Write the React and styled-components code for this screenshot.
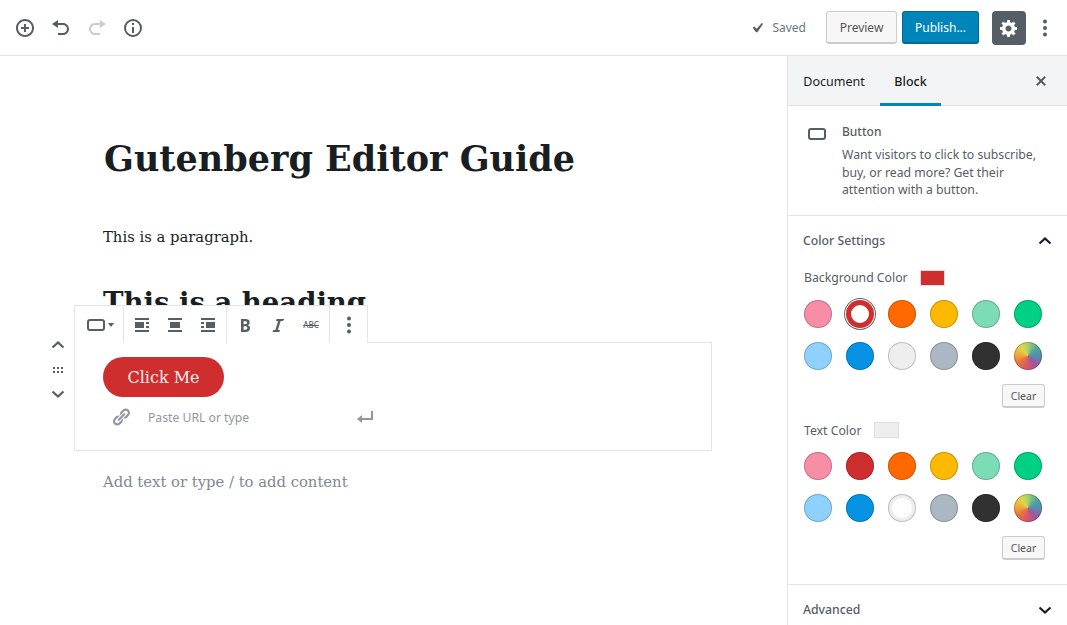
import styled, { createGlobalStyle } from "styled-components";

const GlobalStyle = createGlobalStyle`
  html, body {
    margin: 0;
    padding: 0;
    background: #fff;
  }
  body {
    font-family: "Noto Sans", "Open Sans", sans-serif;
    font-size: 13px;
    color: #191e23;
  }
  * {
    box-sizing: border-box;
  }
`;

const paths = {
  insert:
    "M10 1c-5 0-9 4-9 9s4 9 9 9 9-4 9-9-4-9-9-9zm0 16c-3.9 0-7-3.1-7-7s3.1-7 7-7 7 3.1 7 7-3.1 7-7 7zm1-11H9v3H6v2h3v3h2v-3h3V9h-3V6z",
  undo: "M12 5H7V2L1 6l6 4V7h5c2.2 0 4 1.8 4 4s-1.8 4-4 4H7v2h5c3.3 0 6-2.7 6-6s-2.7-6-6-6z",
  redo: "M8 5h5V2l6 4-6 4V7H8c-2.2 0-4 1.8-4 4s1.8 4 4 4h5v2H8c-3.3 0-6-2.7-6-6s2.7-6 6-6z",
  info: "M10 1a9 9 0 1 0 0 18 9 9 0 0 0 0-18zm0 16a7 7 0 1 1 0-14 7 7 0 0 1 0 14zM9 9h2v6H9V9zm0-4h2v2H9V5z",
  check: "M14.83 4.89l1.34.94-5.81 8.38H9.02L5.78 9.67l1.34-1.25 2.57 2.4z",
  gear: "M18 12h-2.18c-.17.7-.44 1.35-.81 1.93l1.54 1.54-2.1 2.1-1.54-1.54c-.58.36-1.23.63-1.91.79V19H8v-2.18c-.68-.16-1.33-.43-1.91-.79l-1.54 1.54-2.12-2.12 1.54-1.54c-.36-.58-.63-1.23-.79-1.91H1V9.03h2.17c.16-.7.44-1.35.8-1.94L2.43 5.55l2.1-2.1 1.54 1.54c.58-.37 1.24-.64 1.93-.81V2h3v2.18c.68.16 1.33.43 1.91.79l1.54-1.54 2.12 2.12-1.54 1.54c.36.59.64 1.24.8 1.94H18V12zm-8.5 1.5c1.66 0 3-1.34 3-3s-1.34-3-3-3-3 1.34-3 3 1.34 3 3 3z",
  close:
    "M14.95 6.46L11.41 10l3.54 3.54-1.41 1.41L10 11.42l-3.53 3.53-1.42-1.42L8.58 10 5.05 6.47l1.42-1.42L10 8.58l3.54-3.53z",
  alignLeft: "M3 5h14V3H3v2zm9 8V7H3v6h9zm2-4h3V7h-3v2zm0 4h3v-2h-3v2zM3 17h14v-2H3v2z",
  alignCenter: "M3 5h14V3H3v2zm12 8V7H5v6h10zM3 17h14v-2H3v2z",
  alignRight: "M3 5h14V3H3v2zm0 4h3V7H3v2zm14 4V7H8v6h9zM3 13h3v-2H3v2zm0 4h14v-2H3v2z",
  bold: "M6 4v13h4.54c1.37 0 2.46-.33 3.26-1 .8-.66 1.2-1.58 1.2-2.77 0-.84-.17-1.51-.51-2.01s-.9-.85-1.67-1.03v-.09c.57-.1 1.02-.4 1.36-.9s.51-1.13.51-1.91c0-1.14-.39-1.98-1.17-2.5C12.75 4.26 11.5 4 9.78 4H6zm2.57 5.15V6.26h1.36c.73 0 1.27.11 1.61.32.34.22.51.58.51 1.07 0 .54-.16.92-.47 1.15s-.82.35-1.51.35h-1.5zm0 2.19h1.6c1.44 0 2.16.53 2.16 1.61 0 .6-.17 1.05-.51 1.34s-.86.43-1.57.43H8.57v-3.38z",
  italic: "M14.78 6h-2.13l-2.8 9h2.12l-.62 2H4.6l.62-2h2.14l2.8-9H8.03l.62-2h7.75z",
  link: "M17.74 2.76c1.68 1.69 1.68 4.41 0 6.1l-1.53 1.52c-1.12 1.12-2.7 1.47-4.14 1.09l2.62-2.61.76-.77.76-.76c.84-.84.84-2.2 0-3.04-.84-.85-2.2-.85-3.04 0l-.77.76-3.38 3.38c-.37-1.44-.02-3.02 1.1-4.14l1.52-1.53c1.69-1.68 4.42-1.68 6.1 0zM8.59 13.43l5.34-5.34c.42-.42.42-1.1 0-1.52-.44-.43-1.13-.39-1.53 0l-5.33 5.34c-.42.42-.42 1.1 0 1.52.44.43 1.13.39 1.52 0zm-.76 2.29l4.14-4.15c.38 1.44.03 3.02-1.09 4.14l-1.52 1.53c-1.69 1.68-4.41 1.68-6.1 0-1.68-1.68-1.68-4.42 0-6.1l1.53-1.52c1.12-1.12 2.7-1.47 4.14-1.1l-4.14 4.15c-.85.84-.85 2.2 0 3.05.84.84 2.2.84 3.04 0z",
  enter: "M16 4h2v9H7v3l-5-4 5-4v3h9V4z",
};

const Icon = ({ name, size = 20, color = "#555d66" }) => (
  <svg width={size} height={size} viewBox="0 0 20 20" fill={color}>
    <path d={paths[name]} />
  </svg>
);

const Dots = ({ color = "#555d66" }) => (
  <svg width="20" height="20" viewBox="0 0 20 20" fill={color}>
    <circle cx="10" cy="3.5" r="2" />
    <circle cx="10" cy="10" r="2" />
    <circle cx="10" cy="16.5" r="2" />
  </svg>
);

const Chevron = ({ up, color = "#555d66", size = 18 }) => (
  <svg width={size} height={size} viewBox="0 0 18 18" fill="none" stroke={color} strokeWidth="2.2">
    <polyline points={up ? "3.5,11.5 9,6.5 14.5,11.5" : "3.5,6.5 9,11.5 14.5,6.5"} />
  </svg>
);

const ButtonGlyph = () => (
  <svg width="18" height="12" viewBox="0 0 18 12" fill="none" stroke="#555d66" strokeWidth="2">
    <rect x="1" y="1" width="16" height="10" rx="2" />
  </svg>
);

const DragDots = () => (
  <svg width="10" height="6" viewBox="0 0 10 6" fill="#555d66">
    {[0, 4, 8].map((x) => (
      <g key={x}>
        <rect x={x} y="0" width="2" height="2" />
        <rect x={x} y="4" width="2" height="2" />
      </g>
    ))}
  </svg>
);

const Page = styled.div`
  width: 1067px;
  height: 625px;
  display: flex;
  flex-direction: column;
  overflow: hidden;
`;

const TopBar = styled.header`
  height: 56px;
  flex: none;
  display: flex;
  align-items: center;
  justify-content: space-between;
  padding: 0 12px 0 7px;
  border-bottom: 1px solid #e2e4e7;
`;

const TopGroup = styled.div`
  display: flex;
  align-items: center;
`;

const IconSlot = styled.span`
  width: 36px;
  height: 36px;
  display: flex;
  align-items: center;
  justify-content: center;
`;

const SavedLabel = styled.span`
  display: flex;
  align-items: center;
  gap: 5px;
  color: #6c7781;
  font-size: 12px;
  margin-right: 20px;
`;

const PreviewButton = styled.span`
  width: 71px;
  height: 33px;
  display: flex;
  align-items: center;
  justify-content: center;
  border: 1px solid #ccc;
  border-bottom-width: 2px;
  border-radius: 3px;
  background: #f7f7f7;
  color: #555;
  font-size: 12px;
  margin-right: 5px;
`;

const PublishButton = styled.span`
  width: 77px;
  height: 33px;
  display: flex;
  align-items: center;
  justify-content: center;
  border: 1px solid #006799;
  border-bottom-width: 2px;
  border-radius: 3px;
  background: #0085ba;
  color: #fff;
  font-size: 12px;
  margin-right: 13px;
`;

const GearButton = styled.span`
  width: 34px;
  height: 34px;
  display: flex;
  align-items: center;
  justify-content: center;
  border-radius: 4px;
  background: #555d66;
  margin-right: 9px;
`;

const Body = styled.div`
  flex: 1;
  min-height: 0;
  display: flex;
`;

const Editor = styled.main`
  flex: 1;
  min-width: 0;
  padding: 73px 355px 0 74px;
  font-family: "DejaVu Serif", "Liberation Serif", serif;
`;

const PostTitle = styled.h1`
  margin: 0 0 0 30px;
  height: 60px;
  font-size: 35px;
  line-height: 60px;
  font-weight: 700;
  color: #191e23;
  white-space: nowrap;
`;

const Paragraph = styled.p`
  margin: 38px 0 0 29px;
  height: 20px;
  font-size: 14.8px;
  line-height: 20px;
`;

const SubHeading = styled.h2`
  margin: 35px 0 0 29px;
  height: 60px;
  font-size: 27.5px;
  line-height: 40px;
  font-weight: 700;
  white-space: nowrap;
`;

const ButtonBlock = styled.section`
  position: relative;
  width: 638px;
  height: 109px;
  border: 1px solid #e2e4e7;
  padding: 14px 28px 0;
`;

const BlockToolbar = styled.div`
  position: absolute;
  left: -1px;
  top: -38px;
  height: 38px;
  display: flex;
  background: #fff;
  border: 1px solid #e2e4e7;
  border-bottom: 0;
`;

const ToolGroup = styled.div`
  width: ${(p) => p.$width}px;
  display: flex;
  align-items: center;
  justify-content: center;
  gap: 13px;
  border-right: 1px solid #e2e4e7;

  &:last-child {
    border-right: 0;
  }
`;

const SwitcherGroup = styled(ToolGroup)`
  justify-content: flex-start;
  gap: 3px;
  padding-left: 12px;
`;

const Caret = styled.span`
  width: 0;
  height: 0;
  border-left: 3px solid transparent;
  border-right: 3px solid transparent;
  border-top: 4px solid #555d66;
`;

const StruckText = styled.span`
  width: 20px;
  text-align: center;
  font-family: "Noto Sans", sans-serif;
  font-size: 8px;
  font-weight: 500;
  line-height: 20px;
  color: #555d66;
  text-decoration: line-through;
`;

const BlockMover = styled.div`
  position: absolute;
  left: -26px;
  top: -7px;
  width: 18px;
  display: flex;
  flex-direction: column;
  align-items: center;
  gap: 12.5px;
`;

const ClickButton = styled.span`
  display: inline-flex;
  align-items: center;
  justify-content: center;
  width: 121px;
  height: 40px;
  border-radius: 20px;
  background: #cf2e2e;
  color: #eee;
  font-size: 16px;
`;

const UrlRow = styled.div`
  display: flex;
  align-items: center;
  margin: 10px 0 0 8px;
  height: 20px;
  font-family: "Noto Sans", sans-serif;
  font-size: 12.2px;
  color: #8f98a1;
`;

const UrlText = styled.span`
  width: 207px;
  margin-left: 17px;
`;

const Appender = styled.p`
  margin: 20px 0 0 29px;
  font-size: 14.8px;
  line-height: 22px;
  color: #7e8993;
`;

const Sidebar = styled.aside`
  width: 280px;
  flex: none;
  border-left: 1px solid #e2e4e7;
`;

const TabBar = styled.div`
  height: 50px;
  display: flex;
  align-items: stretch;
  background: #f3f4f5;
  border-bottom: 1px solid #e2e4e7;
`;

const Tab = styled.span`
  display: flex;
  align-items: center;
  justify-content: center;
  width: ${(p) => p.$width}px;
  height: 50px;
  color: #191e23;
  font-size: 12.5px;
  font-weight: ${(p) => (p.$active ? 500 : 400)};
  border-bottom: 3px solid ${(p) => (p.$active ? "#0085ba" : "transparent")};
  padding-top: 4px;
`;

const TabClose = styled.span`
  margin-left: auto;
  margin-right: 16px;
  display: flex;
  align-items: center;
`;

const BlockCard = styled.div`
  display: flex;
  height: 110px;
  padding: 17px 16px 0 21px;
  border-bottom: 1px solid #e2e4e7;
`;

const CardIcon = styled.span`
  width: 33px;
  flex: none;
  margin-left: -1px;
  padding: 3px 0 0;
`;

const CardTitle = styled.div`
  font-weight: 500;
  font-size: 12px;
  color: #555d66;
  line-height: 18px;
  margin: 0 0 5px 1px;
`;

const CardText = styled.div`
  margin-left: 1px;
  font-size: 12.25px;
  line-height: 17.7px;
  color: #555d66;
`;

const Panel = styled.div`
  border-bottom: 1px solid #e2e4e7;
  padding: 0 16px 0 15px;
  height: ${(p) => p.$height}px;
`;

const PanelHeader = styled.div`
  height: 49px;
  display: flex;
  align-items: center;
  justify-content: space-between;
  color: #555d66;
  font-weight: 500;
  font-size: 12.25px;
`;

const AdvancedPanel = styled.div`
  padding: 0 16px 0 15px;
`;

const PanelChevron = styled.span`
  display: flex;
  margin-right: -3px;
`;

const ColorLabel = styled.div`
  display: flex;
  align-items: center;
  gap: 12px;
  height: ${(p) => p.$height}px;
  margin-top: ${(p) => p.$top}px;
  color: #555d66;
  font-size: 12.25px;
  padding-left: 1px;
`;

const ColorPreview = styled.span`
  width: 25px;
  height: 16px;
  background: ${(p) => p.$color};
  border: 1px solid #ddd;
`;

const SwatchGrid = styled.div`
  display: grid;
  grid-template-columns: repeat(6, 28px);
  column-gap: 14px;
  row-gap: 14px;
  margin: 14px 0 0 0.5px;
`;

const Swatch = styled.span`
  width: 28px;
  height: 28px;
  border-radius: 50%;
  background: ${(p) => (p.$ring ? "#fff" : p.$color)};
  box-shadow: ${(p) =>
    p.$selected
      ? `inset 0 0 0 5px ${p.$color}, 0 0 0 1px #fff, 0 0 0 2px #666`
      : p.$ring
        ? `inset 0 0 0 1px rgba(0, 0, 0, 0.2), inset 0 0 0 4px ${p.$color}`
        : "inset 0 0 0 1px rgba(0, 0, 0, 0.2)"};
`;

const CustomSwatch = styled.span`
  width: 28px;
  height: 28px;
  border-radius: 50%;
  background: conic-gradient(
    #a8cf6a,
    #4ea4a0 50deg,
    #5a86b4 95deg,
    #a2569c 140deg,
    #d8566a 185deg,
    #e8783c 235deg,
    #eeb23c 285deg,
    #dcd84c 325deg,
    #a8cf6a
  );
  box-shadow: inset 0 0 0 1px rgba(0, 0, 0, 0.2);
`;

const ClearRow = styled.div`
  display: flex;
  justify-content: flex-end;
  margin: 14px 6px 0 0;
`;

const ClearButton = styled.span`
  width: 43px;
  height: 24px;
  display: flex;
  align-items: center;
  justify-content: center;
  border: 1px solid #ccc;
  border-bottom-width: 2px;
  border-radius: 3px;
  background: #f7f7f7;
  color: #555;
  font-size: 10.5px;
`;

const palette = ["#f78da7", "#cf2e2e", "#ff6900", "#fcb900", "#7bdcb5", "#00d084", "#8ed1fc", "#0693e3", "#eeeeee", "#abb8c3", "#313131"];

const ColorPicker = ({ label, preview, selected, ring, top, height }) => (
  <>
    <ColorLabel $top={top} $height={height}>
      {label}
      <ColorPreview $color={preview} />
    </ColorLabel>
    <SwatchGrid>
      {palette.map((c) => (
        <Swatch key={c} $color={c} $selected={c === selected} $ring={c === selected || c === ring} />
      ))}
      <CustomSwatch />
    </SwatchGrid>
    <ClearRow>
      <ClearButton>Clear</ClearButton>
    </ClearRow>
  </>
);

export default function App() {
  return (
    <Page>
      <GlobalStyle />
      <TopBar>
        <TopGroup>
          <IconSlot><Icon name="insert" /></IconSlot>
          <IconSlot><Icon name="undo" /></IconSlot>
          <IconSlot><Icon name="redo" color="#c9ccd0" /></IconSlot>
          <IconSlot><Icon name="info" /></IconSlot>
        </TopGroup>
        <TopGroup>
          <SavedLabel>
            <Icon name="check" />
            Saved
          </SavedLabel>
          <PreviewButton>Preview</PreviewButton>
          <PublishButton>Publish...</PublishButton>
          <GearButton><Icon name="gear" color="#fff" /></GearButton>
          <Dots />
        </TopGroup>
      </TopBar>
      <Body>
        <Editor>
          <PostTitle>Gutenberg Editor Guide</PostTitle>
          <Paragraph>This is a paragraph.</Paragraph>
          <SubHeading>This is a heading</SubHeading>
          <ButtonBlock>
            <BlockToolbar>
              <SwitcherGroup $width={49}>
                <ButtonGlyph />
                <Caret />
              </SwitcherGroup>
              <ToolGroup $width={103}>
                <Icon name="alignLeft" />
                <Icon name="alignCenter" />
                <Icon name="alignRight" />
              </ToolGroup>
              <ToolGroup $width={103}>
                <Icon name="bold" />
                <Icon name="italic" />
                <StruckText>ABC</StruckText>
              </ToolGroup>
              <ToolGroup $width={37}>
                <Dots />
              </ToolGroup>
            </BlockToolbar>
            <BlockMover>
              <Chevron up />
              <DragDots />
              <Chevron />
            </BlockMover>
            <ClickButton>Click Me</ClickButton>
            <UrlRow>
              <Icon name="link" color="#8f98a1" />
              <UrlText>Paste URL or type</UrlText>
              <Icon name="enter" color="#8f98a1" />
            </UrlRow>
          </ButtonBlock>
          <Appender>Add text or type / to add content</Appender>
        </Editor>
        <Sidebar>
          <TabBar>
            <Tab $width={92}>Document</Tab>
            <Tab $width={61} $active>Block</Tab>
            <TabClose><Icon name="close" /></TabClose>
          </TabBar>
          <BlockCard>
            <CardIcon><ButtonGlyph /></CardIcon>
            <div>
              <CardTitle>Button</CardTitle>
              <CardText>
                Want visitors to click to subscribe,
                <br />
                buy, or read more? Get their
                <br />
                attention with a button.
              </CardText>
            </div>
          </BlockCard>
          <Panel $height={369}>
            <PanelHeader>
              Color Settings
              <PanelChevron><Chevron up color="#191e23" /></PanelChevron>
            </PanelHeader>
            <ColorPicker label="Background Color" preview="#cf2e2e" selected="#cf2e2e" top={4} height={17} />
            <ColorPicker label="Text Color" preview="#eeeeee" ring="#eeeeee" top={14} height={16} />
          </Panel>
          <AdvancedPanel>
            <PanelHeader>
              Advanced
              <PanelChevron><Chevron color="#191e23" /></PanelChevron>
            </PanelHeader>
          </AdvancedPanel>
        </Sidebar>
      </Body>
    </Page>
  );
}
